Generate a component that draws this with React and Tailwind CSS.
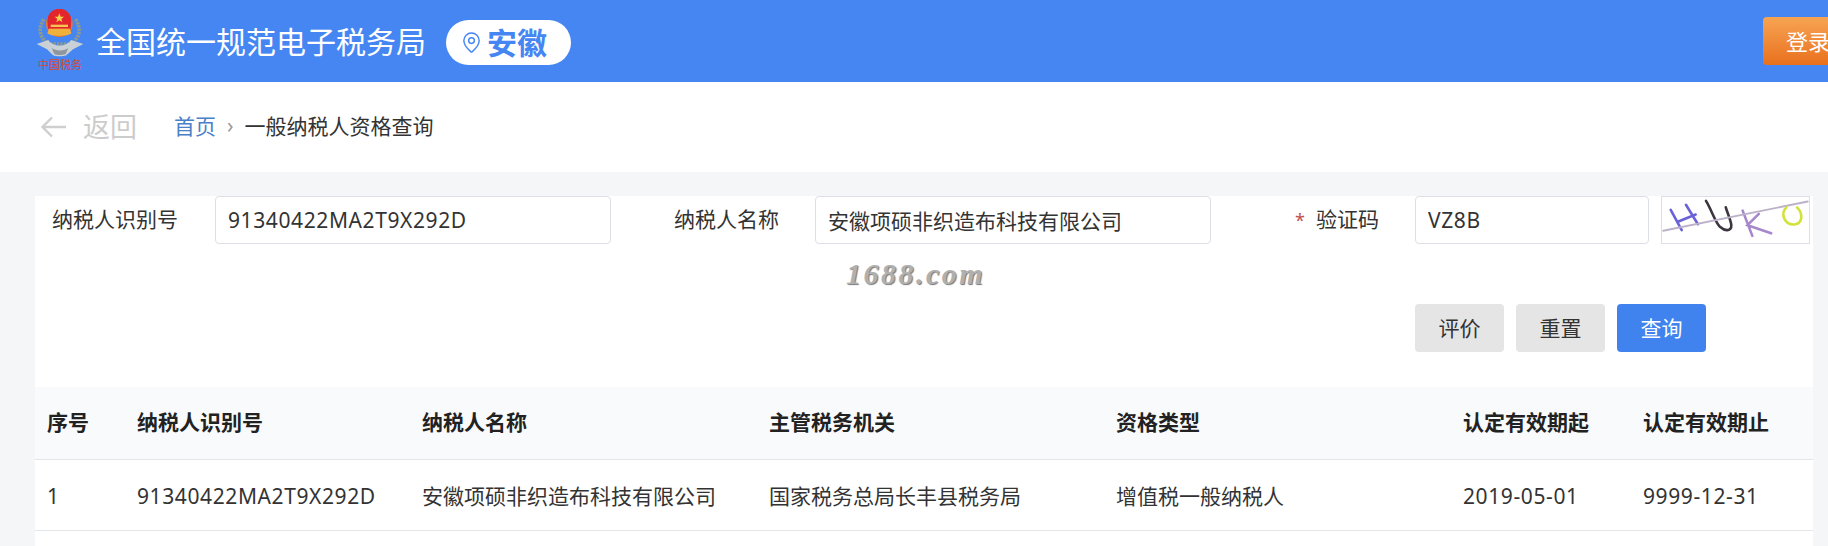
import { MapPin } from "lucide-react";

const columns = [
  { label: "序号", value: "1", width: "w-[90px]" },
  { label: "纳税人识别号", value: "91340422MA2T9X292D", width: "w-[285px]", latin: true },
  { label: "纳税人名称", value: "安徽项硕非织造布科技有限公司", width: "w-[347px]" },
  { label: "主管税务机关", value: "国家税务总局长丰县税务局", width: "w-[347px]" },
  { label: "资格类型", value: "增值税一般纳税人", width: "w-[347px]" },
  { label: "认定有效期起", value: "2019-05-01", width: "w-[180px]", latin: true },
  { label: "认定有效期止", value: "9999-12-31", width: "w-[182px]", latin: true },
];

const Emblem = () => (
  <svg viewBox="0 0 150 190" className="w-[50px] h-[64px] shrink-0">
    <path d="M26 30 C8 58 14 86 40 104 L108 104 C134 86 140 58 122 30" fill="none" stroke="#8f9a8c" strokeWidth="11" strokeDasharray="7 3" />
    <path d="M5 104 L40 92 C52 114 96 114 108 92 L145 104 L114 120 L94 138 C84 142 64 142 54 138 L36 120 Z" fill="#c9d0d6" />
    <path d="M50 116 C62 126 88 126 100 116 L92 134 C82 138 66 138 58 134 Z" fill="#8f979e" />
    <circle cx="73" cy="43" r="40" fill="#e8792c" />
    <path d="M37 34 A36 36 0 0 1 109 34 L107 58 H39 Z" fill="#e3262c" />
    <path d="M73 12 l4 10 h10 l-8 7 3 10 -9 -6 -9 6 3 -10 -8 -7 h10 Z" fill="#f5d04a" />
    <rect x="47" y="46" width="52" height="7" fill="#f5c451" />
    <path d="M42 58 h62 l5 14 c-8 10 -64 10 -72 0 Z" fill="#f0b13c" />
    <text x="75" y="180" textAnchor="middle" fill="#d8482c" fontSize="33" fontFamily="'Noto Sans CJK SC', sans-serif">中国税务</text>
  </svg>
);

const Captcha = () => (
  <svg viewBox="65 18 446 142" className="w-[149px] h-[48px] shrink-0 bg-white border border-[#dcdfe6]" fill="none" strokeLinecap="round">
    <path d="M88 58 L122 120 M135 42 L172 102 M108 95 L165 72" stroke="#6a62d6" strokeWidth="8" />
    <path d="M197 30 C215 60 225 95 240 110 C255 124 276 125 275 105 C274 90 262 65 258 50" stroke="#3d3640" strokeWidth="8" />
    <path d="M310 60 L340 138 M360 70 L325 105 L398 130" stroke="#a687cc" strokeWidth="8" />
    <path d="M65 122 L511 32" stroke="#bcb1c9" strokeWidth="6" />
    <path d="M445 50 C425 70 440 105 470 103 C495 100 498 70 478 50" stroke="#d3e23a" strokeWidth="8" />
  </svg>
);

const App = () => {
  return (
    <div className="relative w-full h-[546px] overflow-hidden bg-[#f5f6f8] text-[21px] text-[#333] [font-family:'Noto_Sans','Noto_Sans_CJK_SC',sans-serif]">
      <header className="h-[82px] bg-[#4586f3] flex items-center pl-[35px]">
        <Emblem />
        <h1 className="ml-[11px] text-[30px] text-white whitespace-nowrap">全国统一规范电子税务局</h1>
        <div className="ml-[20px] mt-[2px] w-[125px] h-[45px] rounded-full bg-white flex items-center pl-[14px] text-[#4586f3] text-[30px] font-bold">
          <MapPin size={23} strokeWidth={1.5} />
          <span className="ml-[4px]">安徽</span>
        </div>
        <button className="ml-auto mr-[-20px] w-[85px] h-[48px] rounded-l-[4px] bg-gradient-to-b from-[#f7a452] to-[#e8701a] text-white text-[22px] text-left pl-[23px] whitespace-nowrap">
          登录
        </button>
      </header>

      <nav className="h-[90px] bg-white flex items-center pl-[40px]">
        <svg viewBox="0 0 26 22" className="w-[26px] h-[22px]" fill="none" stroke="#cfcfcf" strokeWidth="2.4">
          <path d="M26 11 H3 M12 1.5 L2.5 11 L12 20.5" />
        </svg>
        <span className="ml-[17px] text-[27px] text-[#cccccc]">返回</span>
        <a className="ml-[37px] text-[#4a80c8]">首页</a>
        <span className="ml-[11px] text-[#999] text-[21px] leading-none mb-[3px]">›</span>
        <span className="ml-[11px]">一般纳税人资格查询</span>
      </nav>

      <main className="mt-[24px] ml-[35px] mr-[15px] h-[350px] bg-white">
        <div className="flex items-center h-[48px]">
          <label className="w-[180px] pl-[17px]">纳税人识别号</label>
          <input readOnly value="91340422MA2T9X292D" className="w-[396px] h-[48px] px-[12px] tracking-[0.6px] bg-white border border-[#dcdfe6] rounded-[4px] outline-none" />
          <label className="w-[204px] pl-[63px]">纳税人名称</label>
          <input readOnly value="安徽项硕非织造布科技有限公司" className="w-[396px] h-[48px] px-[12px] bg-white border border-[#dcdfe6] rounded-[4px] outline-none" />
          <label className="w-[204px] pl-[84px] whitespace-nowrap">
            <span className="text-[#c0504d] text-[18px] mr-[11px]">*</span>验证码
          </label>
          <input readOnly value="VZ8B" className="w-[234px] h-[48px] px-[12px] mr-[12px] tracking-[0.6px] bg-white border border-[#dcdfe6] rounded-[4px] outline-none" />
          <Captcha />
        </div>

        <div className="flex justify-end gap-[12px] mt-[60px] pr-[107px]">
          <button className="w-[89px] h-[48px] pt-[1px] rounded-[4px] bg-[#e5e5e5]">评价</button>
          <button className="w-[89px] h-[48px] pt-[1px] rounded-[4px] bg-[#e5e5e5]">重置</button>
          <button className="w-[89px] h-[48px] pt-[1px] rounded-[4px] bg-[#4083ee] text-white">查询</button>
        </div>

        <table className="mt-[35px] w-full table-fixed border-collapse">
          <thead>
            <tr className="h-[72px] bg-[#f9fafb] border-b border-[#e3e5e8]">
              {columns.map((col) => (
                <th key={col.label} className={`${col.width} pl-3 text-left font-bold text-[#222]`}>
                  {col.label}
                </th>
              ))}
            </tr>
          </thead>
          <tbody>
            <tr className="h-[71px] border-b border-[#e3e5e8]">
              {columns.map((col) => (
                <td key={col.label} className={col.latin ? "pl-3 pt-[4px] whitespace-nowrap tracking-[0.6px]" : "pl-3 pt-[4px] whitespace-nowrap"}>
                  {col.value}
                </td>
              ))}
            </tr>
          </tbody>
        </table>
      </main>

      <span className="absolute left-[846px] top-[251px] text-[30px] font-bold italic tracking-[2.5px] text-[#b0b0b0] [font-family:'Liberation_Serif',serif] [text-shadow:1px_1px_1px_#777]">
        1688.com
      </span>
    </div>
  );
};

export default App;
